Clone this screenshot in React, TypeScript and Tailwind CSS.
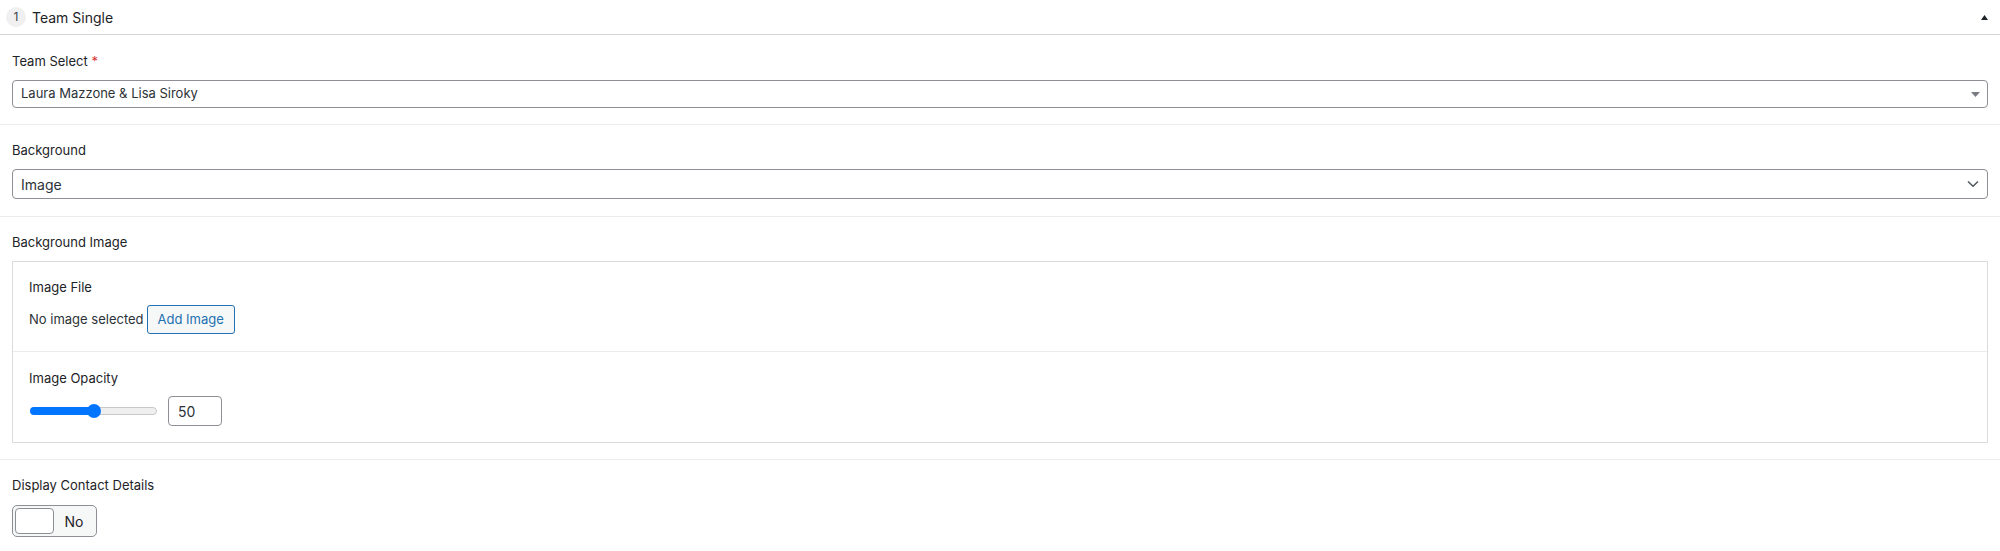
import React from "react";

export default function App() {
  return (
    <div
      className="w-[2000px] h-[551px] bg-white text-[13px] text-[#1d2327] overflow-hidden"
      style={{ fontFamily: 'Inter, "Liberation Sans", Arial, sans-serif' }}
    >
      {/* Header */}
      <div className="h-[35px] flex items-center pl-[6px] pr-[12px] border-b border-[#d4d4d6]">
        <div className="w-[20px] h-[20px] rounded-full bg-[#f0f0f1] flex items-center justify-center text-[12px] text-[#3c434a]">
          1
        </div>
        <div className="ml-[6px] text-[14px] text-[#1d2327]">Team Single</div>
        <div className="ml-auto mr-[0px] flex items-center">
          <svg width="7" height="5" viewBox="0 0 7 5">
            <path d="M3.5 0 L7 5 L0 5 Z" fill="#1d2327" />
          </svg>
        </div>
      </div>

      {/* Team Select */}
      <div className="px-[12px] pt-[17px] pb-[16px] border-b border-[#ececec]">
        <div className="h-[18px] leading-[18px] text-[#1d2327]">
          Team Select <span className="text-[#d63638]">*</span>
        </div>
        <div className="mt-[10px] h-[28px] border border-[#8c8f94] rounded-[4px] flex items-center pl-[8px] pr-[7px] text-[#2c3338]">
          <span>Laura Mazzone &amp; Lisa Siroky</span>
          <svg className="ml-auto" width="9" height="5" viewBox="0 0 9 5">
            <path d="M0 0 L9 0 L4.5 5 Z" fill="#787c82" />
          </svg>
        </div>
      </div>

      {/* Background */}
      <div className="px-[12px] pt-[16px] pb-[17px] border-b border-[#ececec]">
        <div className="h-[18px] leading-[18px]">Background</div>
        <div className="mt-[10px] h-[30px] border border-[#8c8f94] rounded-[4px] flex items-center pl-[8px] pr-[8px] text-[#2c3338] text-[14px]">
          <span>Image</span>
          <svg className="ml-auto" width="12" height="8" viewBox="0 0 12 8">
            <path d="M1 1.5 L6 6.2 L11 1.5" fill="none" stroke="#50575e" strokeWidth="1.5" />
          </svg>
        </div>
      </div>

      {/* Background Image */}
      <div className="px-[12px] pt-[16px] pb-[16px] border-b border-[#ececec]">
        <div className="h-[18px] leading-[18px]">Background Image</div>
        <div className="mt-[10px] border border-[#dcdcde]">
          <div className="px-[16px] pt-[16px] pb-[17px] border-b border-[#ececec]">
            <div className="h-[18px] leading-[18px]">Image File</div>
            <div className="mt-[9px] flex items-center">
              <span className="text-[#2c3338]">No image selected</span>
              <button className="ml-[3px] h-[29px] px-[10px] border border-[#2271b1] rounded-[3px] bg-[#f6f7f7] text-[#2271b1] text-[13px]">
                Add Image
              </button>
            </div>
          </div>
          <div className="px-[16px] pt-[17px] pb-[16px]">
            <div className="h-[18px] leading-[18px]">Image Opacity</div>
            <div className="mt-[9px] flex items-center">
              <div className="relative w-[129px] h-[14px] flex items-center">
                <div className="absolute left-[1px] right-[1px] h-[8px] rounded-full bg-[#efefef] border border-[#c9c9c9]" />
                <div className="absolute left-[1px] w-[66px] h-[8px] rounded-l-full bg-[#0075ff]" />
                <div className="absolute left-[58px] w-[14px] h-[14px] rounded-full bg-[#0075ff]" />
              </div>
              <div className="ml-[10px] w-[54px] h-[30px] border border-[#8c8f94] rounded-[4px] flex items-center pl-[9px] text-[14px] text-[#2c3338]">
                50
              </div>
            </div>
          </div>
        </div>
      </div>

      {/* Display Contact Details */}
      <div className="px-[12px] pt-[16px]">
        <div className="h-[18px] leading-[18px]">Display Contact Details</div>
        <div className="mt-[11px] w-[85px] h-[32px] border border-[#8c8f94] rounded-[5px] bg-[#f6f7f7] flex items-center pl-[2px]">
          <div className="w-[39px] h-[26px] bg-white border border-[#8c8f94] rounded-[4px]" />
          <div className="flex-1 text-center text-[14px] text-[#1d2327] pr-[2px]">No</div>
        </div>
      </div>
    </div>
  );
}
